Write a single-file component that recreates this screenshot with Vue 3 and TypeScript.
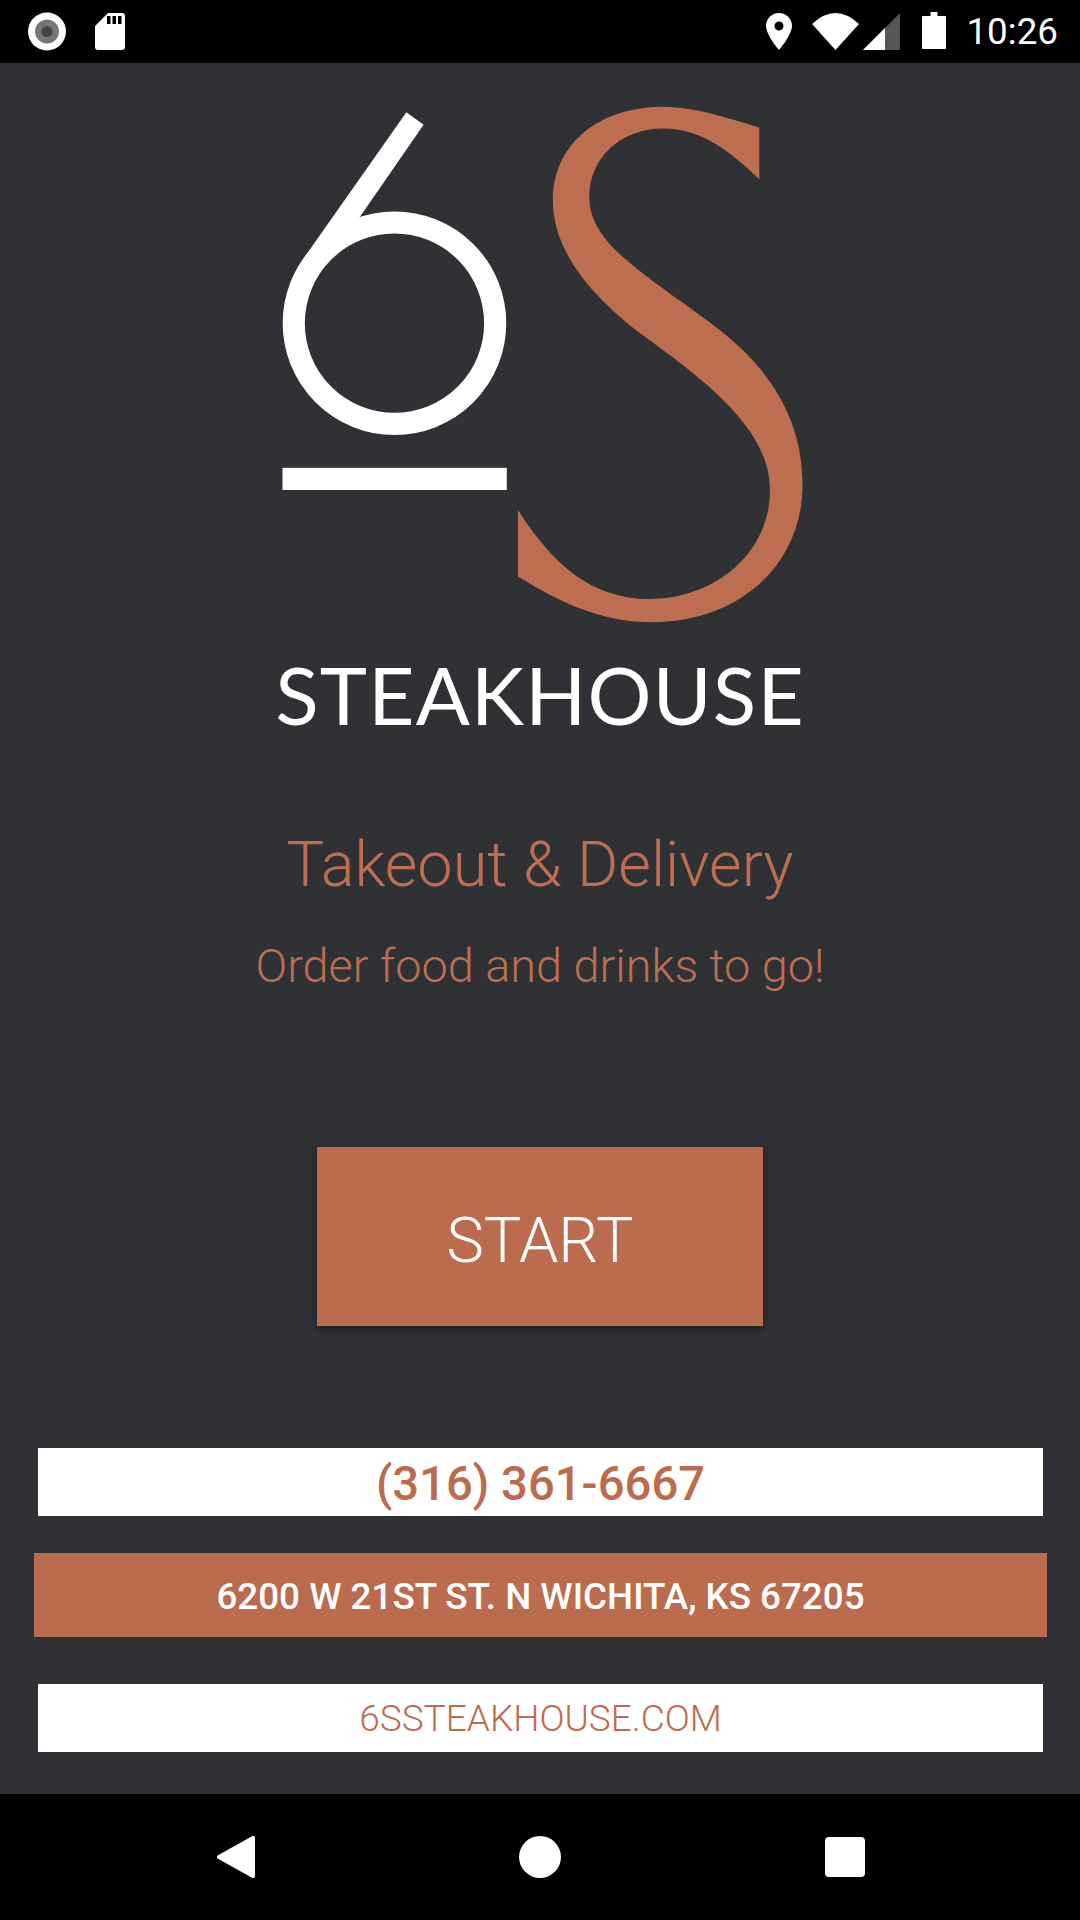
<script setup lang="ts">
const brand: string = "6S";
</script>

<template>
  <div class="screen">
    <header class="status">
      <svg class="ic" width="38" height="63" viewBox="0 0 38 63">
        <circle cx="19" cy="31.5" r="19" fill="#fff" />
        <circle cx="19" cy="31.5" r="12" fill="#777" />
        <circle cx="19" cy="31.5" r="5.5" fill="#444" />
      </svg>
      <svg class="ic sd" width="30" height="63" viewBox="0 0 30 63">
        <path
          fill="#fff"
          fill-rule="evenodd"
          d="M13 13H27a3 3 0 0 1 3 3V47a3 3 0 0 1-3 3H3a3 3 0 0 1-3-3V26ZM12 16v8h3.500v-8ZM17.500 16v8h3.500v-8ZM23 16v8h3.500v-8Z"
        />
      </svg>
      <div class="spacer"></div>
      <svg class="ic pin" width="26" height="63" viewBox="0 0 26 63">
        <path
          fill="#fff"
          fill-rule="evenodd"
          d="M13 13C5.800 13 0 18.800 0 26C0 35 13 50 13 50C13 50 26 35 26 26C26 18.800 20.200 13 13 13ZM13 21.500a4.500 4.500 0 1 1 0 9a4.500 4.500 0 1 1 0-9Z"
        />
      </svg>
      <svg class="ic wifi" width="47" height="63" viewBox="0 0 47 63">
        <path fill="#fff" d="M0 24Q23.500 2 47 24L23.500 50Z" />
      </svg>
      <svg class="ic signal" width="37" height="63" viewBox="0 0 37 63">
        <path fill="#555" d="M0 50L37 13V50Z" />
        <path fill="#fff" d="M0 50L22 28V50Z" />
      </svg>
      <svg class="ic battery" width="24" height="63" viewBox="0 0 24 63">
        <path fill="#fff" d="M8.500 12H15.500V16H23a1 1 0 0 1 1 1V48a1 1 0 0 1-1 1H1a1 1 0 0 1-1-1V17a1 1 0 0 1 1-1H8.500Z" />
      </svg>
      <span class="time">10:26</span>
    </header>

    <main class="content">
      <svg class="logo" width="560" height="560" viewBox="0 0 1568 1568" role="img" :aria-label="brand">
        <circle cx="376.500" cy="653" r="282" fill="none" stroke="#fff" stroke-width="62" />
        <polygon points="410,62 458,97 280,355 200,420 121,473" fill="#fff" />
        <rect x="63" y="1058" width="628" height="62" fill="#fff" />
        <path
          fill="#bd6e50"
          d="M1398 105C1300 75 1210 47 1130 47C950 47 820 150 820 310C820 470 961 602 1064 681C1250 815 1428 950 1428 1120C1428 1300 1270 1425 1090 1425C930 1425 820 1330 722 1175V1362C850 1440 960 1490 1100 1490C1340 1490 1519 1330 1519 1105C1519 900 1405 760 1269 658C1077 514 922 430 922 300C922 190 1010 108 1130 108C1230 108 1310 165 1398 250Z"
        />
      </svg>
      <div class="wordmark">STEAKHOUSE</div>
      <h1 class="title">Takeout &amp; Delivery</h1>
      <p class="subtitle">Order food and drinks to go!</p>
      <button class="start" type="button">START</button>
      <div class="strip phone">(316) 361-6667</div>
      <div class="strip address">6200 W 21ST ST. N WICHITA, KS 67205</div>
      <div class="strip web">6SSTEAKHOUSE.COM</div>
    </main>

    <footer class="nav">
      <svg width="38" height="42" viewBox="0 0 38 42">
        <polygon points="2,21 36,2 36,40" fill="#fff" stroke="#fff" stroke-width="4" stroke-linejoin="round" />
      </svg>
      <svg width="42" height="42" viewBox="0 0 42 42">
        <circle cx="21" cy="21" r="21" fill="#fff" />
      </svg>
      <svg width="40" height="40" viewBox="0 0 40 40">
        <rect width="40" height="40" rx="4" fill="#fff" />
      </svg>
    </footer>
  </div>
</template>

<style scoped>
.screen {
  width: 1080px;
  height: 1920px;
  display: flex;
  flex-direction: column;
  background: #303135;
  font-family: Roboto, "Liberation Sans", sans-serif;
  overflow: hidden;
}
.status {
  height: 63px;
  flex: none;
  background: #000;
  display: flex;
  align-items: center;
  padding: 0 22px 0 28px;
  box-sizing: border-box;
}
.ic {
  display: block;
  flex: none;
}
.sd {
  margin-left: 29px;
}
.spacer {
  flex: 1;
}
.wifi {
  margin-left: 20px;
}
.signal {
  margin-left: 4px;
}
.battery {
  margin-left: 22px;
}
.time {
  margin-left: 20px;
  color: #fff;
  font-size: 36.75px;
  line-height: 63px;
}
.content {
  flex: 1;
  display: flex;
  flex-direction: column;
  align-items: center;
  min-height: 0;
}
.logo {
  display: block;
  flex: none;
  margin-top: 27px;
}
.wordmark {
  margin-top: 3px;
  font-family: Lato, sans-serif;
  font-size: 80px;
  line-height: 83px;
  letter-spacing: 1.2px;
  color: #fff;
}
.title {
  margin: 89px 0 0;
  font-size: 63px;
  line-height: 80px;
  font-weight: 300;
  color: #bd6e50;
}
.subtitle {
  margin: 31px 0 0;
  font-size: 46.8px;
  line-height: 60px;
  font-weight: 300;
  color: #bd6e50;
}
.start {
  width: 446px;
  height: 179px;
  margin-top: 151px;
  padding: 8px 0 0;
  border: 0;
  background: #bb6c4f;
  color: #fff;
  font-family: inherit;
  font-size: 63px;
  font-weight: 300;
  box-shadow: 0 3px 6px rgba(0, 0, 0, 0.4);
}
.strip {
  display: flex;
  align-items: center;
  justify-content: center;
  box-sizing: border-box;
}
.phone,
.web {
  width: 1005px;
  height: 68px;
  background: #fff;
  color: #bb6c4f;
  margin-left: 1px;
}
.phone {
  margin-top: 122px;
  padding-top: 3px;
  font-size: 47.25px;
  font-weight: 500;
}
.address {
  width: 1013px;
  height: 84px;
  margin-top: 37px;
  margin-left: 1px;
  padding-top: 2px;
  background: #bb6c4f;
  color: #fff;
  font-size: 36.75px;
  font-weight: 500;
}
.web {
  margin-top: 47px;
  font-size: 37px;
  font-weight: 300;
}
.nav {
  height: 126px;
  flex: none;
  background: #000;
  display: flex;
  align-items: center;
  padding-left: 217px;
  gap: 264px;
  box-sizing: border-box;
}
</style>
